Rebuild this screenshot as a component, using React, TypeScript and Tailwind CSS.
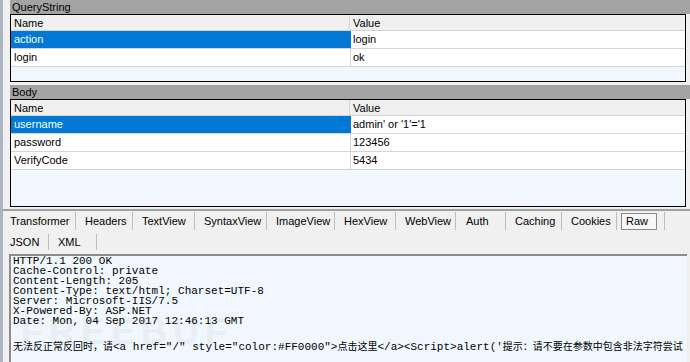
import React from 'react';

const ui = { fontFamily: '"Liberation Sans", Arial, sans-serif' };
const mono = { fontFamily: '"Liberation Mono", "DejaVu Sans Mono", "Noto Sans CJK SC", monospace' };
const cjk = { fontFamily: '"Noto Sans CJK SC", sans-serif' };

type Row = { name: string; value: string; selected?: boolean };

function Panel({ title, rows, fill }: { title: string; rows: Row[]; fill: number }) {
  return (
    <div className="flex flex-col">
      <div className="h-[14px] bg-[#a3a3a3] pl-[2px] text-[11px] leading-[14px] text-black">{title}</div>
      <div className="mr-[4px] border border-black bg-white">
        <div className="flex h-[16px] bg-[#f0f0f0] border-b border-[#d4d4d4] text-[11px] leading-[16px]">
          <div className="w-[339px] pl-[3px] border-r border-[#d4d4d4]">Name</div>
          <div className="flex-1 pl-[3px]">Value</div>
        </div>
        {rows.map((r) => (
          <div key={r.name} className="flex h-[18px] border-b border-[#d4d4d4] text-[11px] leading-[17px]">
            <div
              className={
                r.selected
                  ? 'w-[340px] pl-[3px] bg-[#0078d7] text-white'
                  : 'w-[340px] pl-[3px] border-r border-[#d4d4d4] text-black'
              }
            >
              {r.name}
            </div>
            <div className="flex-1 pl-[2px] text-black">{r.value}</div>
          </div>
        ))}
        <div className="bg-[#f0f7ff]" style={{ height: fill }} />
      </div>
    </div>
  );
}

// tab label + width measured off the screenshot
const tabs: [string, string][] = [
  ['Transformer', 'w-[66px] pl-0'],
  ['Headers', 'w-[57px] pl-[9px]'],
  ['TextView', 'w-[62px] pl-[9px]'],
  ['SyntaxView', 'w-[72px] pl-[9px]'],
  ['ImageView', 'w-[68px] pl-[9px]'],
  ['HexView', 'w-[61px] pl-[9px]'],
  ['WebView', 'w-[60px] pl-[9px]'],
  ['Auth', 'w-[50px] pl-[10px]'],
  ['Caching', 'w-[56px] pl-[9px]'],
  ['Cookies', 'w-[55px] pl-[9px]'],
];

const raw = [
  'HTTP/1.1 200 OK',
  'Cache-Control: private',
  'Content-Length: 205',
  'Content-Type: text/html; Charset=UTF-8',
  'Server: Microsoft-IIS/7.5',
  'X-Powered-By: ASP.NET',
  'Date: Mon, 04 Sep 2017 12:46:13 GMT',
];

function Cjk({ children }: { children: React.ReactNode }) {
  return (
    <span className="text-[10px]" style={cjk}>
      {children}
    </span>
  );
}

export default function App() {
  return (
    <div className="w-[690px] h-[362px] flex bg-[#f0f0f0] overflow-hidden" style={ui}>
      <div className="w-[3px] bg-[#a9b4c2]" />
      <div className="flex-1 flex flex-col pl-[7px]">
        <Panel
          title="QueryString"
          fill={14}
          rows={[
            { name: 'action', value: 'login', selected: true },
            { name: 'login', value: 'ok' },
          ]}
        />
        <div className="h-[3px]" />
        <Panel
          title="Body"
          fill={36}
          rows={[
            { name: 'username', value: "admin' or '1'='1", selected: true },
            { name: 'password', value: '123456' },
            { name: 'VerifyCode', value: '5434' },
          ]}
        />

        {/* ── Inspector tabs ── */}
        <div className="mt-[2px] -ml-[7px] border-t-2 border-[#a0a0a0]" />
        <div className="flex items-stretch h-[18px] mt-[1px] text-[11px] text-black">
          {tabs.map(([t, w]) => (
            <div key={t} className={`${w} flex items-center border-r border-[#bdbdbd]`}>
              {t}
            </div>
          ))}
          <div className="w-[48px] flex items-center pl-[4px] border-r border-[#bdbdbd]">
            <div className="h-[17px] w-[36px] border border-[#8a8a8a] bg-[#f7f7f7] pl-[4px] leading-[15px]">Raw</div>
          </div>
        </div>
        <div className="flex items-stretch h-[16px] mt-[4px] text-[11px]">
          <div className="w-[39px] flex items-center border-r border-[#bdbdbd]">JSON</div>
          <div className="w-[48px] flex items-center pl-[9px] border-r border-[#bdbdbd]">XML</div>
        </div>

        <div className="relative flex-1 mt-[4px] mr-[3px] -ml-[1px] border-t-2 border-l-2 border-[#8c8c8c] bg-[#f0f7ff] pl-[2px] overflow-hidden">
          <div className="absolute left-[10px] top-[58px] text-[36px] leading-none font-bold tracking-[6px] text-[#e7eef4] select-none">
            FREEBUF
          </div>
          <div className="relative text-[11px] leading-[10px] text-black" style={mono}>
            {raw.map((l) => (
              <div key={l} className="h-[10px] whitespace-pre">{l}</div>
            ))}
            <div className="h-[12px]" />
            <div className="whitespace-nowrap leading-[16px]">
              <Cjk>无法反正常反回时，请</Cjk>&lt;a href="/" style="color:#FF0000"&gt;<Cjk>点击这里</Cjk>&lt;/a&gt;&lt;Script&gt;alert('<Cjk>提示：请不要在参数中包含非法字符尝试</Cjk>
            </div>
          </div>
        </div>
      </div>
    </div>
  );
}
